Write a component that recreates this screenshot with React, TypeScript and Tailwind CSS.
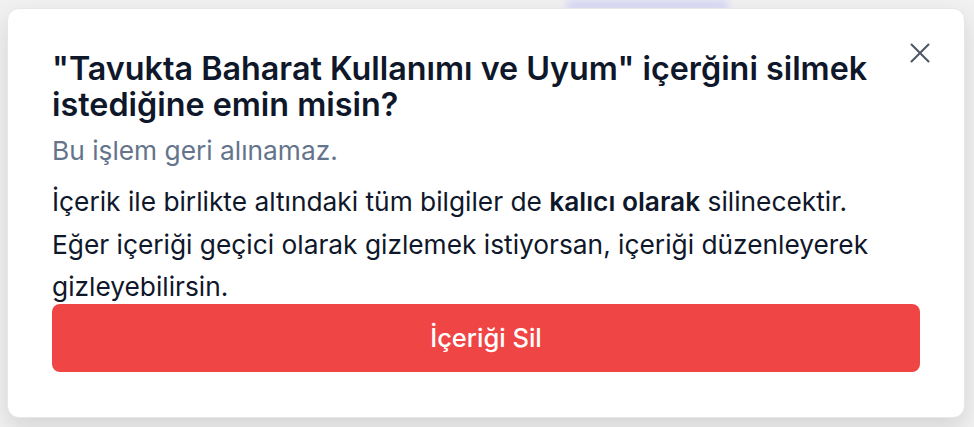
import React from 'react';

export default function App() {
  return (
    <div
      className="relative w-[974px] h-[427px] overflow-hidden bg-[#f1f1f2]"
      style={{ fontFamily: 'Inter, "Noto Sans", sans-serif' }}
    >
      {/* Blurred page behind the dialog */}
      <div className="absolute left-[566px] top-0 w-[163px] h-[10px] rounded-md bg-[#d9d8f6] blur-[3px]" />

      {/* Dialog */}
      <div className="relative ml-[7px] mt-[8px] flex w-[958px] flex-col rounded-xl border border-[#e5e7eb] bg-white px-[44px] pt-[42px] pb-[45px] shadow-[0_10px_25px_rgba(0,0,0,0.12)]">
        <button className="absolute top-[34px] right-[34px] text-[#4b5563]" aria-label="Kapat">
          <svg width="20" height="20" viewBox="0 0 20 20" fill="none" stroke="currentColor" strokeWidth="2" strokeLinecap="round">
            <path d="M1.5 1.5 18.5 18.5M18.5 1.5 1.5 18.5" />
          </svg>
        </button>

        <h2 className="text-[32.3px] leading-[36px] font-semibold text-[#0f172a]">
          "Tavukta Baharat Kullanımı ve Uyum" içerğini silmek istediğine emin misin?
        </h2>
        <p className="mt-[7px] text-[26.3px] leading-[42px] text-[#64748b]">Bu işlem geri alınamaz.</p>

        <p className="mt-[9px] text-[26.3px] leading-[42px] text-[#0f172a]">
          İçerik ile birlikte altındaki tüm bilgiler de <span className="font-semibold">kalıcı olarak</span> silinecektir.
        </p>
        <p className="mt-[1px] mb-[-4px] text-[26.3px] leading-[42px] text-[#0f172a]">
          Eğer içeriği geçici olarak gizlemek istiyorsan, içeriği düzenleyerek gizleyebilirsin.
        </p>

        <button className="flex h-[68px] w-full items-center justify-center rounded-lg bg-[#ef4545] text-[25.5px] font-medium text-white">
          İçeriği Sil
        </button>
      </div>
    </div>
  );
}
